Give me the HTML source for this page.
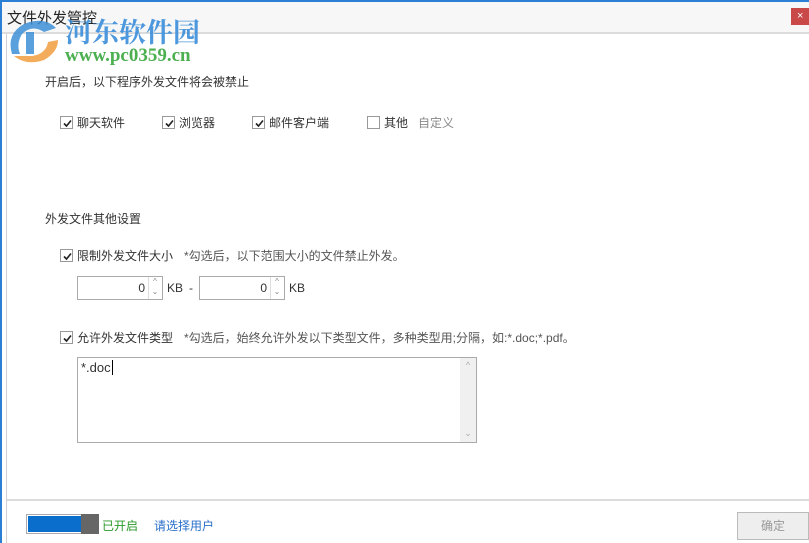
<!DOCTYPE html>
<html><head><meta charset="utf-8"><style>
*{margin:0;padding:0;box-sizing:border-box}
body{width:809px;height:543px;overflow:hidden;background:#fff;position:relative;font-family:"Liberation Sans","Noto Sans CJK SC",sans-serif;font-size:12px;color:#333}
.a{position:absolute;white-space:nowrap}
.cb{position:absolute;width:13px;height:13px;border:1px solid #999;background:#fff}
.cb svg{position:absolute;left:1px;top:1px}
.in{position:absolute;height:24px;border:1px solid #aaa;background:#fff}
</style></head><body>
<div class="a" style="left:0;top:0;width:809px;height:2px;background:#2b7fd4"></div>
<div class="a" style="left:0;top:2px;width:809px;height:30px;background:#f7f7f7"></div>
<div class="a" style="left:0;top:32px;width:809px;height:2px;background:#dcdcdc"></div>
<div class="a" style="left:0;top:0;width:2px;height:543px;background:#2b7fd4"></div>
<div class="a" style="left:6px;top:34px;width:1px;height:509px;background:#d0d0d0"></div>
<div class="a" style="left:791px;top:8px;width:18px;height:17px;background:#c94848;color:#fff;font-size:11px;line-height:17px;padding-left:6px">×</div>
<div class="a" style="left:7px;top:7px;font-size:15px;color:#222">文件外发管控</div>
<svg class="a" style="left:4px;top:14px" width="58" height="52" viewBox="0 0 58 52">
<path d="M8 40 Q2 20 20 10 Q40 2 52 14 L40 18 Q28 10 18 20 Q12 30 16 40Z" fill="#3d8fd6" opacity=".85"/>
<path d="M10 42 Q22 52 40 46 Q54 38 54 26 L44 28 Q42 40 28 42Z" fill="#f2a24a" opacity=".9"/>
<rect x="22" y="18" width="8" height="22" fill="#3d8fd6" opacity=".85"/>
</svg>
<div class="a" style="left:65px;top:11px;font-size:27px;font-weight:bold;color:#3b8edb;font-family:'Noto Serif CJK SC',serif;opacity:.9">河东软件园</div>
<div class="a" style="left:65px;top:45px;font-size:19px;font-weight:bold;color:#4caf50;font-family:'Liberation Serif',serif">www.pc0359.cn</div>
<div class="a" style="left:45px;top:73px">开启后，以下程序外发文件将会被禁止</div>
<div class="cb" style="left:60px;top:116px"><svg width="11" height="11"><path d="M2 5.5 L4.5 8 L9 2.5" stroke="#222" stroke-width="1.6" fill="none"/></svg></div>
<div class="a" style="left:77px;top:114px">聊天软件</div>
<div class="cb" style="left:162px;top:116px"><svg width="11" height="11"><path d="M2 5.5 L4.5 8 L9 2.5" stroke="#222" stroke-width="1.6" fill="none"/></svg></div>
<div class="a" style="left:179px;top:114px">浏览器</div>
<div class="cb" style="left:252px;top:116px"><svg width="11" height="11"><path d="M2 5.5 L4.5 8 L9 2.5" stroke="#222" stroke-width="1.6" fill="none"/></svg></div>
<div class="a" style="left:269px;top:114px">邮件客户端</div>
<div class="cb" style="left:367px;top:116px"></div>
<div class="a" style="left:384px;top:114px">其他</div>
<div class="a" style="left:418px;top:114px;color:#888">自定义</div>
<div class="a" style="left:45px;top:210px">外发文件其他设置</div>
<div class="cb" style="left:60px;top:249px"><svg width="11" height="11"><path d="M2 5.5 L4.5 8 L9 2.5" stroke="#222" stroke-width="1.6" fill="none"/></svg></div>
<div class="a" style="left:77px;top:247px">限制外发文件大小</div>
<div class="a" style="left:184px;top:247px;color:#555">*勾选后，以下范围大小的文件禁止外发。</div>
<div class="in" style="left:77px;top:276px;width:86px"><span class="a" style="right:17px;top:4px">0</span><span class="a" style="right:1px;top:0;width:13px;height:22px;border-left:1px solid #ddd;font-size:8px;color:#888;text-align:center;line-height:10px">^<br>⌄</span></div>
<div class="a" style="left:167px;top:281px">KB</div>
<div class="a" style="left:189px;top:281px">-</div>
<div class="in" style="left:199px;top:276px;width:86px"><span class="a" style="right:17px;top:4px">0</span><span class="a" style="right:1px;top:0;width:13px;height:22px;border-left:1px solid #ddd;font-size:8px;color:#888;text-align:center;line-height:10px">^<br>⌄</span></div>
<div class="a" style="left:289px;top:281px">KB</div>
<div class="cb" style="left:60px;top:331px"><svg width="11" height="11"><path d="M2 5.5 L4.5 8 L9 2.5" stroke="#222" stroke-width="1.6" fill="none"/></svg></div>
<div class="a" style="left:77px;top:329px">允许外发文件类型</div>
<div class="a" style="left:184px;top:329px;color:#555">*勾选后，始终允许外发以下类型文件，多种类型用;分隔，如:*.doc;*.pdf。</div>
<div class="a" style="left:77px;top:357px;width:400px;height:86px;border:1px solid #aaa;background:#fff">
<span class="a" style="left:3px;top:2px;font-size:13px">*.doc<span style="border-left:1px solid #000;margin-left:1px"></span></span>
<div class="a" style="right:0;top:0;width:16px;height:84px;background:#f0f0f0;color:#aaa;font-size:9px;text-align:center"><div style="margin-top:2px">^</div><div style="margin-top:58px">⌄</div></div>
</div>
<div class="a" style="left:7px;top:499px;width:802px;height:2px;background:#dcdcdc"></div>
<div class="a" style="left:26px;top:514px;width:73px;height:20px;border:1px solid #aaa;background:#fff"></div>
<div class="a" style="left:28px;top:516px;width:53px;height:16px;background:#0a6fcc"></div>
<div class="a" style="left:81px;top:514px;width:18px;height:20px;background:#666"></div>
<div class="a" style="left:102px;top:517px;color:#2a9a2a">已开启</div>
<div class="a" style="left:154px;top:517px;color:#2a6fc9">请选择用户</div>
<div class="a" style="left:737px;top:512px;width:72px;height:28px;border:1px solid #bbb;background:#eee;color:#999;text-align:center;line-height:26px">确定</div>
</body></html>
